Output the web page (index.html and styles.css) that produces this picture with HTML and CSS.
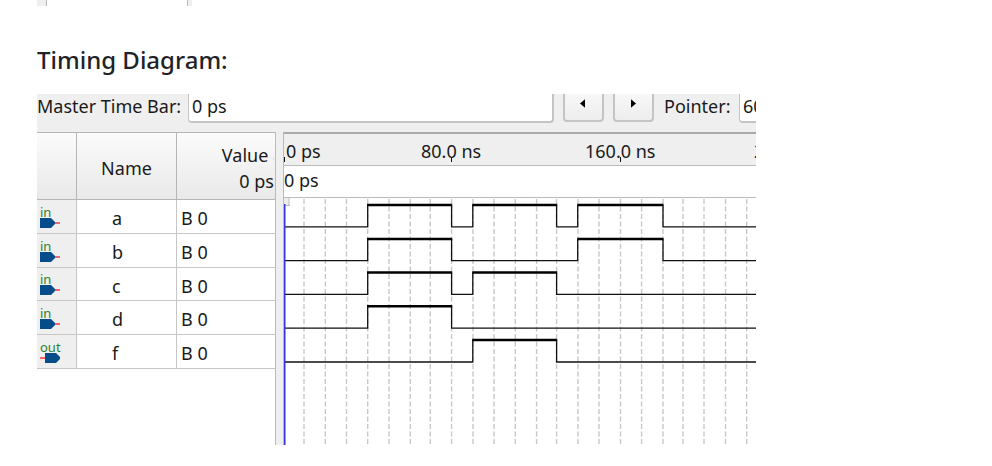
FILE: index.html
```html
<!DOCTYPE html>
<html lang="en">
<head>
<meta charset="utf-8">
<title>Timing Diagram</title>
<link rel="stylesheet" href="styles.css">
</head>
<body>
<main class="page">
  <div class="strip"><div class="strip-cell"></div></div>
  <h2 class="heading">Timing Diagram:</h2>
  <section class="viewer">
    <div class="toolbar">
      <label class="bar-label" for="master">Master Time Bar:</label>
      <input class="field master" id="master" type="text" value="0 ps">
      <button class="step" type="button" aria-label="Previous"><svg width="5" height="9" viewBox="0 0 6 10"><path d="M6 0v10L0 5z"/></svg></button>
      <button class="step" type="button" aria-label="Next"><svg width="5" height="9" viewBox="0 0 6 10"><path d="M0 0v10l6-5z"/></svg></button>
      <label class="pointer-label" for="pointer">Pointer:</label>
      <input class="field pointer" id="pointer" type="text" value="60">
    </div>
    <div class="panes">
      <div class="signals">
        <table>
          <colgroup><col class="col-icon"><col class="col-name"><col class="col-value"></colgroup>
          <thead>
            <tr><th></th><th>Name</th><th class="value-head">Value <span class="cut">at</span><br>0 ps</th></tr>
          </thead>
          <tbody>
            <tr><td class="kind"><span>in</span><svg width="21" height="10" viewBox="0 0 21 10"><path class="wire" d="M14 5h6"/><path class="pin" d="M0 0h11l4 4v2l-4 4H0z"/></svg></td><td class="name">a</td><td>B 0</td></tr>
            <tr><td class="kind"><span>in</span><svg width="21" height="10" viewBox="0 0 21 10"><path class="wire" d="M14 5h6"/><path class="pin" d="M0 0h11l4 4v2l-4 4H0z"/></svg></td><td class="name">b</td><td>B 0</td></tr>
            <tr><td class="kind"><span>in</span><svg width="21" height="10" viewBox="0 0 21 10"><path class="wire" d="M14 5h6"/><path class="pin" d="M0 0h11l4 4v2l-4 4H0z"/></svg></td><td class="name">c</td><td>B 0</td></tr>
            <tr><td class="kind"><span>in</span><svg width="21" height="10" viewBox="0 0 21 10"><path class="wire" d="M14 5h6"/><path class="pin" d="M0 0h11l4 4v2l-4 4H0z"/></svg></td><td class="name">d</td><td>B 0</td></tr>
            <tr><td class="kind"><span>out</span><svg width="21" height="10" viewBox="0 0 21 10"><path class="wire" d="M0 5h6"/><path class="pin" d="M5 0h11l4 4v2l-4 4H5z"/></svg></td><td class="name">f</td><td>B 0</td></tr>
          </tbody>
        </table>
      </div>
      <div class="waves">
        <svg class="ruler" width="472" height="31" viewBox="284 134 472 31">
          <text x="286" y="158">0 ps</text>
          <text x="421" y="158">80.0 ns</text>
          <text x="585" y="158">160.0 ns</text>
          <text x="754" y="158">240.0 ns</text>
          <path class="tick" d="M284.500 157v5M451.500 157v5M620.500 157v5"/>
        </svg>
        <div class="cursor-time">0 ps</div>
        <svg class="plot" width="472" height="247" viewBox="284 198 472 247">
          <path class="grid" d="M304 199V445M325.300 199V445M346.500 199V445M367.700 199V445M389 199V445M410.300 199V445M430.300 199V445M451.600 199V445M473 199V445M494 199V445M515.300 199V445M536.600 199V445M556.600 199V445M578 199V445M599 199V445M620.500 199V445M641.600 199V445M663 199V445M683 199V445M704 199V445M725.500 199V445M746.700 199V445"/>
          <path class="handle" d="M284 198h5v7h-5z"/>
          <path class="handle-edge" d="M289 197v9M284 205.500h6"/>
          <g class="low">
            <path d="M284 226.800H367.700V205M451.600 205V226.800H472.800V205M556.600 205V226.800H577.700V205M663 205V226.800H756"/>
            <path d="M284 260.700H367.700V239M451.600 239V260.700H577.700V239M663 239V260.700H756"/>
            <path d="M284 294.400H367.700V272.500M451.600 272.500V294.400H472.800V272.500M556.600 272.500V294.400H756"/>
            <path d="M284 328.100H367.700V306.300M451.600 306.300V328.100H756"/>
            <path d="M284 362H472.800V340M556.600 340V362H756"/>
          </g>
          <path class="high" d="M367 205H452.200M472.200 205H557.200M577.200 205H663.500M367 239H452.200M577.200 239H663.500M367 272.500H452.200M472.200 272.500H557.200M367 306.300H452.200M472.200 340H557.200"/>
          <path class="cursor" d="M284 204V445"/>
        </svg>
      </div>
    </div>
  </section>
</main>
</body>
</html>
```
FILE: styles.css
```css
* { box-sizing: border-box; }

body {
  margin: 0;
  background: #fff;
  color: #1f2328;
  font-family: "Noto Sans", sans-serif;
}

.page {
  max-width: 756px;
  padding-left: 37px;
}

.strip {
  width: 155px;
  height: 6px;
  padding: 0 4px 0 9px;
  background: #efefef;
}

.strip-cell {
  height: 6px;
  border: solid #bbb;
  border-width: 0 1px;
  background: #fff;
}

.heading {
  margin: 36px 0 16px;
  font-size: 24px;
  line-height: 36px;
  font-weight: 500;
}

.viewer {
  overflow: hidden;
  background: #efefef;
  color: #1a1a1a;
  font-size: 18px;
}

.toolbar {
  display: flex;
  align-items: flex-start;
  height: 38px;
  line-height: 24px;
}

.bar-label, .pointer-label { flex: none; white-space: nowrap; }
.bar-label { width: 151px; }
.pointer-label { width: 75px; margin-left: 10px; }

.field {
  height: 29px;
  padding: 0 3px 4px;
  border: 2px solid #c4c4c4;
  border-width: 0 2px 2px 1px;
  border-radius: 0 0 4px 4px;
  background: #fff;
  color: #1a1a1a;
  font: inherit;
}

.master { flex: 1; min-width: 0; }
.pointer { flex: none; width: 60px; margin-right: -43px; }

.step {
  flex: none;
  display: flex;
  justify-content: center;
  width: 41px;
  height: 28px;
  margin-left: 9px;
  padding: 5px 3px 0 0;
  border: 2px solid #c4c4c4;
  border-top: 0;
  border-radius: 0 0 4px 4px;
  background: linear-gradient(#f8f8f8, #ededed);
}

.step + .step { padding: 5px 0 0; }

.panes {
  display: grid;
  grid-template-columns: 239px 1fr;
  gap: 7px;
}

.signals {
  border-right: 1px solid #bbb;
  background: #fff;
}

table {
  width: 100%;
  table-layout: fixed;
  border-spacing: 0;
}

.col-icon { width: 40px; }
.col-name { width: 100px; }

th {
  height: 68px;
  padding: 4px 0 0;
  border: solid #b5b5b5;
  border-width: 1px 1px 1px 0;
  background: linear-gradient(#fbfbfb, #e9e9e9);
  font-weight: 400;
  line-height: 26px;
}

.value-head {
  overflow: hidden;
  padding: 3px 1px 0 0;
  text-align: right;
  white-space: nowrap;
}

.cut {
  display: inline-block;
  width: 1px;
  overflow: hidden;
  vertical-align: top;
  color: #c9813a;
}

td {
  height: 34px;
  padding: 3px 0 0 4px;
  border: solid #c6c6c6;
  border-width: 0 1px 1px 0;
  line-height: 24px;
}

tr:nth-child(3) td { height: 33px; }

th:last-child, td:last-child { border-right: 0; }

.name { padding-left: 35px; }

.kind {
  padding: 0 0 0 3px;
  background: #efefef;
  color: #2d802d;
  font-size: 13px;
  line-height: 12px;
}

.kind span, .kind svg { display: block; }
.pin { fill: #054c8a; }
.wire { stroke: #f23a46; stroke-width: 1.500; }

.waves {
  min-width: 0;
  overflow: hidden;
  border-top: 2px solid #aaa;
  border-left: 1px solid #bbb;
  background: #fff;
}

.ruler, .plot { display: block; }
.ruler { background: #efefef; }
.ruler text { fill: #1a1a1a; font-size: 18px; }
.tick { stroke: #111; }

.cursor-time {
  height: 33px;
  border: solid #bbb;
  border-width: 1px 0;
  line-height: 29px;
}

.grid, .low, .high, .cursor, .handle-edge { fill: none; }
.grid { stroke: #c8c8c8; stroke-width: 1.4; stroke-dasharray: 5 2.500; }
.low { stroke: #111; stroke-width: 1.300; }
.high { stroke: #000; stroke-width: 2.400; }
.cursor { stroke: #3434df; stroke-width: 3; }
.handle { fill: #eee; }
.handle-edge { stroke: #bbb; }
```
